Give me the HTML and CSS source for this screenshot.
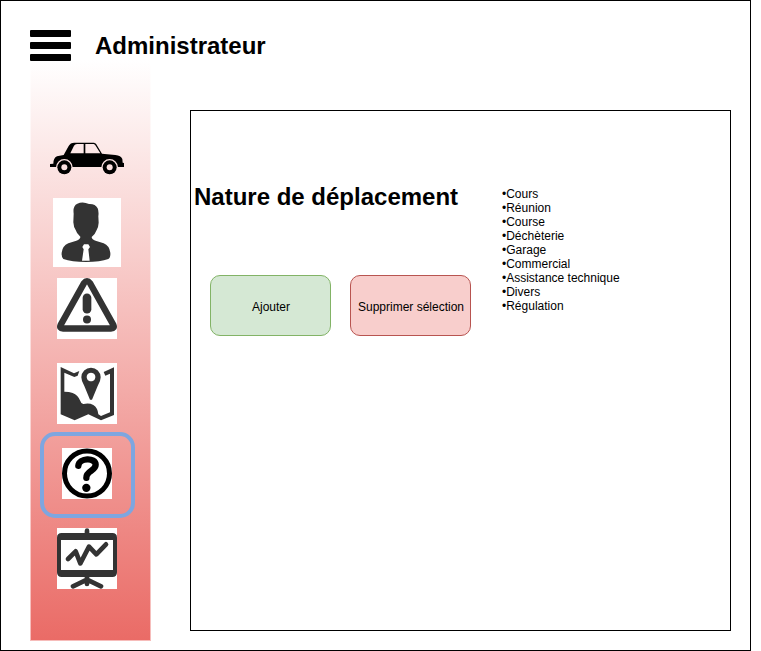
FILE: index.html
```html
<!DOCTYPE html>
<html lang="fr">
<head>
<meta charset="utf-8">
<title>Administrateur</title>
<link rel="stylesheet" href="styles.css">
</head>
<body>
<div class="frame">
  <header class="topbar">
    <div class="burger"><span></span><span></span><span></span></div>
    <h1 class="title">Administrateur</h1>
  </header>
  <div class="body">
    <nav class="sidebar">
      <svg class="icon car" viewBox="27 36 228 99">
        <path d="M30 111V102L40 101Q40 84 51 79L71 75L86 48Q91 38 103 38H162L168 41L186 71L226 75Q243 77 247 87L248 98L252 99V111Z"/>
        <path fill="#fde8e8" d="M91 70L102 47Q105 42 111 42H131V70ZM136 42H161L165 44L181 70H136Z"/>
        <g fill="#fbe0e0"><path d="M48 112a25 25 0 0 1 50 0zM184 112a25 25 0 0 1 50 0z"/></g>
        <circle cx="73" cy="112" r="21"/><circle cx="209" cy="112" r="21"/>
        <circle fill="#fbe0e0" cx="73" cy="112" r="9"/><circle fill="#fbe0e0" cx="209" cy="112" r="9"/>
      </svg>
      <svg class="icon tile person" viewBox="24 24 204 207">
        <path d="M86 71Q83 47 97 41Q113 33 132 42Q151 41 158 55Q162 64 160 79L161 98Q160 113 155 120Q151 132 140 141Q140 149 154 153L176 160Q193 167 196 188Q197 204 190 207Q166 216 123 216Q80 216 55 207Q49 202 50 188Q52 168 70 160L94 152Q107 148 106 140Q95 131 92 120Q86 112 85 97Z"/>
        <path fill="#fff" d="M117 163H130L135 171L130 178L134 212H111L116 178L112 171Z"/>
      </svg>
      <svg class="icon tile warning" viewBox="36 18 180 182">
        <path fill="none" stroke="#333" stroke-width="19" stroke-linejoin="round" d="M117 33Q126 21 135 33L205 158Q210 169 198 169H54Q42 169 47 158Z"/>
        <path d="M113 77a13 13 0 0 1 26 0V111a13 13 0 0 1-26 0Z"/><circle cx="126" cy="142" r="12"/>
      </svg>
      <svg class="icon tile map" viewBox="36 24 180 181">
        <path d="M47 35L87 54L103 47L98 61L88 65L58 52V109Q73 109 83 113Q99 119 106 137Q109 147 116 146Q132 142 145 149Q158 157 160 177L168 182L195 171V55L181 61L176 50L207 36V179L168 195L130 177L89 195L47 177Z"/>
        <path fill-rule="evenodd" d="M135 133L118 92Q109 78 109 66A29 29 0 0 1 167 66Q167 78 158 92L141 133ZM138 52a13 13 0 1 0 .1 0Z"/>
      </svg>
      <div class="selected">
        <svg class="icon tile help" viewBox="96 69 150 150">
          <circle cx="171" cy="144" r="67.5" fill="none" stroke="#000" stroke-width="15"/>
          <path fill="none" stroke="#000" stroke-width="19" stroke-linecap="round" d="M145 121C147 97 197 95 197 118C197 137 168 136 169 157"/>
          <circle cx="169" cy="187" r="12.5"/>
        </svg>
      </div>
      <svg class="icon tile chart" viewBox="96 25 180 181">
        <path fill-rule="evenodd" d="M179 39V32Q180 25 186 25Q193 25 193 32V39H262Q276 39 276 53V157Q276 171 262 171H110Q96 171 96 157V53Q96 39 110 39ZM108 60V150H264V60Z"/>
        <path fill="none" stroke="#333" stroke-width="14" stroke-linecap="round" stroke-linejoin="round" d="M129 117L152 94L166 130L192 80L214 103L243 73"/>
        <path fill="none" stroke="#333" stroke-width="14" stroke-linecap="round" d="M144 199L186 179L228 199M186 168V192"/>
      </svg>
    </nav>
    <main class="panel">
      <section class="actions">
        <h2 class="title">Nature de déplacement</h2>
        <div class="buttons">
          <button class="btn add">Ajouter</button>
          <button class="btn remove">Supprimer sélection</button>
        </div>
      </section>
      <ul class="list">
        <li>Cours</li><li>Réunion</li><li>Course</li><li>Déchèterie</li><li>Garage</li><li>Commercial</li><li>Assistance technique</li><li>Divers</li><li>Régulation</li>
      </ul>
    </main>
  </div>
</div>
</body>
</html>
```
FILE: styles.css
```css
* { box-sizing: border-box; }
body { margin: 0; background: #fff; color: #000; font: 12px/14px "Liberation Sans", Arial, sans-serif; }
.frame { width: 751px; height: 651px; border: 1px solid #000; padding: 29px 19px 0 29px; }
.topbar { position: relative; display: flex; height: 30px; gap: 24px; }
.burger { display: flex; flex-direction: column; gap: 5px; width: 41px; height: 31px; flex: none; }
.burger span { flex: none; height: 7px; background: #000; border-radius: 1px; }
.title { margin: 0; font-size: 24px; line-height: 28px; font-weight: bold; white-space: nowrap; }
.topbar .title { margin-top: 2px; }
.body { display: flex; align-items: flex-start; justify-content: space-between; }
.sidebar { display: flex; flex-direction: column; align-items: center; width: 121px; height: 581px; border: 1px solid rgba(255,255,255,.55); border-top: 0; padding-top: 82px; background: linear-gradient(#fff, #ea6b66) border-box; }
.icon { display: block; flex: none; fill: #333; }
.tile { background: #fff; width: 60px; height: 60px; margin-right: 7px; }
.car { width: 76px; height: 33px; margin-right: 7px; fill: #000; }
.person { width: 68px; height: 69px; margin-top: 23px; }
.warning { margin-top: 11px; height: 61px; }
.map { margin-top: 24px; height: 61px; }
.selected { display: flex; flex: none; justify-content: center; width: 95px; height: 86px; margin: 8px 7px 0 0; padding-top: 12px; border: 4px solid #7ea6e0; border-radius: 15px; }
.help { width: 50px; height: 51px; margin: 0 1px 0 0; fill: #000; }
.chart { margin-top: 10px; height: 61px; }
.panel { display: flex; width: 541px; height: 521px; margin-top: 50px; border: 1px solid #000; }
.actions { width: 311px; padding: 72px 0 0 3px; }
.buttons { display: flex; gap: 19px; margin: 64px 0 0 16px; }
.btn { width: 121px; height: 61px; padding: 2px 0 0 1px; border: 1px solid; border-radius: 10px; font: inherit; color: #000; white-space: nowrap; }
.add { background: #d5e8d4; border-color: #82b366; }
.remove { background: #f8cecc; border-color: #b85450; }
.list { list-style: none; margin: 76px 0 0; padding: 0; }
.list li::before { content: "•"; }
```
